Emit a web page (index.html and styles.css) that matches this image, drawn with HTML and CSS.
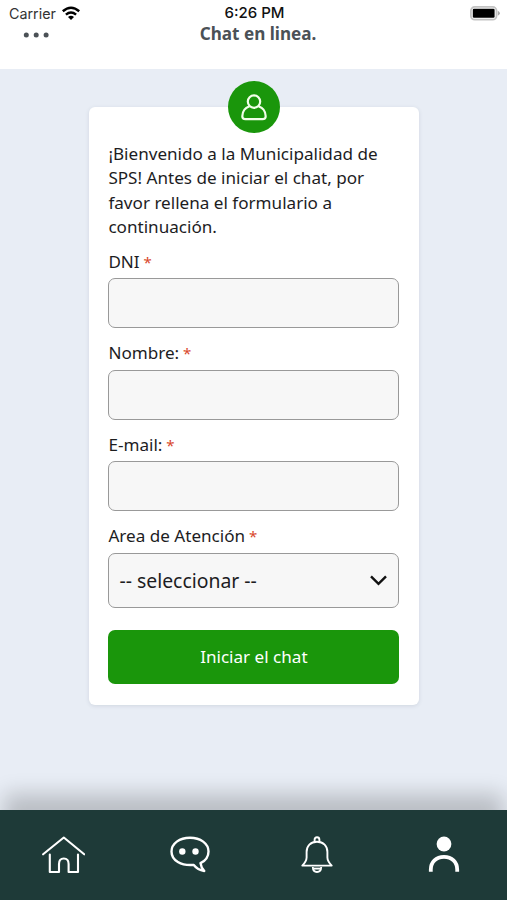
FILE: index.html
```html
<!DOCTYPE html>
<html lang="es">
<head>
<meta charset="utf-8">
<title>Chat en linea.</title>
<link rel="stylesheet" href="styles.css">
</head>
<body>
<div class="screen">
  <header class="header">
    <div class="status">
      <div class="carrier">
        <span>Carrier</span>
        <svg width="20" height="15" viewBox="0 0 20 15"><g fill="none" stroke="#000" stroke-width="2.5"><path d="M1.8 5.2Q10-1.7 18.2 5.2"/><path d="M4.9 8.6Q10 4.3 15.1 8.6"/></g><path d="M7 11Q10 8.7 13 11L10 14Z"/></svg>
      </div>
      <div class="time">6:26 PM</div>
      <svg class="battery" width="31" height="15" viewBox="0 0 31 15"><rect x="1.9" y=".9" width="25.6" height="12.8" rx="3.8" fill="#fff" stroke="#c3c3c3" stroke-width="1.8"/><rect x="3.8" y="2.8" width="21.8" height="9" rx="1.2"/><path d="M28.8 4.8Q33 7.3 28.8 9.8Z" fill="#aaa"/></svg>
    </div>
    <div class="titlebar">
      <svg class="dots" width="26" height="6" viewBox="0 0 26 6"><g fill="#4b5156"><circle cx="3.3" cy="3" r="2.5"/><circle cx="13.2" cy="3" r="2.5"/><circle cx="23.1" cy="3" r="2.5"/></g></svg>
      <h1 class="title">Chat en linea.</h1>
    </div>
  </header>
  <main class="main">
    <form class="card">
      <div class="avatar">
        <svg width="26" height="27" viewBox="0 0 26 27" fill="none" stroke="#f2ffe9" stroke-width="2.2"><circle cx="13" cy="7.6" r="6.2"/><path d="M8.4 12.2C3.6 13.9 1.4 18 1.3 22.2Q1.3 25.2 4.5 25.2H21.5Q24.7 25.2 24.7 22.2C24.6 18 22.4 13.9 17.6 12.2"/></svg>
      </div>
      <p class="intro">¡Bienvenido a la Municipalidad de SPS! Antes de iniciar el chat, por favor rellena el formulario a continuación.</p>
      <div class="field"><label class="label" for="dni">DNI <span class="req">*</span></label><input class="control" id="dni"></div>
      <div class="field"><label class="label" for="nombre">Nombre: <span class="req">*</span></label><input class="control" id="nombre"></div>
      <div class="field"><label class="label" for="email">E-mail: <span class="req">*</span></label><input class="control" id="email"></div>
      <div class="field"><span class="label">Area de Atención <span class="req">*</span></span>
        <div class="control select"><span>-- seleccionar --</span><svg width="17" height="11" viewBox="0 0 17 11" fill="none" stroke="#111" stroke-width="2.4"><path d="M1 1.3L8.5 8.8L16 1.3"/></svg></div>
      </div>
      <button class="submit" type="button">Iniciar el chat</button>
    </form>
  </main>
  <nav class="nav">
    <a class="tab"><svg width="44" height="38" viewBox="-.8 0 44 38" fill="none" stroke="#fff" stroke-width="2.1" stroke-linecap="round" stroke-linejoin="round"><path d="M1.3 18.3L22 1.5L42.4 18.3"/><path d="M8 18.5V36H17.2V28Q17.2 22.5 22 22.5T26.8 28V36H36.2V18.5"/></svg></a>
    <a class="tab"><svg width="44" height="38" viewBox="0 0 44 38" fill="none" stroke="#fff" stroke-width="2.4" stroke-linejoin="round"><path d="M22 1.7C32.5 1.7 40.5 7.5 40.5 15.5C40.5 21 37 25 32.5 27.2Q33 31.5 36.3 35Q29.5 33.7 25.8 28.9C13 30 3.5 24.5 3.5 15.5C3.5 7.5 11.5 1.7 22 1.7Z"/><circle cx="14.3" cy="15.5" r="3.2" fill="#fff" stroke="none"/><circle cx="27.5" cy="15.5" r="3.2" fill="#fff" stroke="none"/></svg></a>
    <a class="tab"><svg width="44" height="38" viewBox="0 0 44 38" fill="none" stroke="#fff" stroke-width="1.9" stroke-linejoin="round"><path d="M19.6 6V3.7Q19.6 1.2 22 1.2T24.4 3.7V6"/><path d="M22 5.8C15.5 5.8 11.6 10 11.6 16V21.5C11.6 25 9.5 27.3 7.3 29.6H36.7C34.5 27.3 32.4 25 32.4 21.5V16C32.4 10 28.5 5.8 22 5.8Z"/><path d="M17.8 31Q18 36 22 36T26.2 31"/><path d="M19 32.6H25"/></svg></a>
    <a class="tab"><svg width="44" height="38" viewBox="0 0 44 38"><circle cx="22" cy="8" r="7.4" fill="#fff"/><path d="M8.8 35.7V33.5C8.8 26 14.2 20.8 22 20.8S35.2 26 35.2 33.5V35.7" fill="none" stroke="#fff" stroke-width="3.8"/></svg></a>
  </nav>
</div>
</body>
</html>
```
FILE: styles.css
```css
* { box-sizing: border-box; }
body { margin: 0; font-family: "Noto Sans", sans-serif; color: #1d1d1f; }
svg { display: block; flex: none; }
.screen { width: 507px; height: 900px; display: flex; flex-direction: column; overflow: hidden; background: #e8edf5; }
.header { height: 69px; flex: none; background: #fff; }
.status { height: 26px; padding: 0 7px 0 9px; display: grid; grid-template-columns: 1fr auto 1fr; align-items: center; font-family: Inter, sans-serif; }
.carrier { display: flex; align-items: center; gap: 5px; font-size: 14.3px; color: #333; }
.time { font-size: 15px; line-height: 18px; font-weight: 500; color: #111; }
.battery { justify-self: end; }
.titlebar { height: 18px; padding-left: 23px; display: grid; grid-template-columns: 26px 1fr 40px; align-items: center; }
.title { margin: -2px 0 0; text-align: center; font-size: 17.1px; line-height: 18px; font-weight: 700; color: #4b5156; }
.main { flex: 1; padding-top: 38px; }
.card { position: relative; width: 330px; height: 598px; margin: 0 auto 0 89px; padding: 34.6px 19.5px 0 19.4px; border-radius: 6px; background: #fff; box-shadow: 0 1px 4px rgba(40, 60, 80, .12); }
.avatar { position: absolute; top: -26px; left: 139px; width: 52px; height: 52px; border-radius: 50%; background: #1a960b; display: grid; place-items: center; }
.intro { margin: 0 0 9px; font-size: 17.1px; line-height: 24.5px; }
.field { height: 91.6px; }
.label { display: block; height: 29.6px; font-size: 17.1px; line-height: 25px; }
.req { margin-left: -.6px; font-size: 15px; color: #d9472b; }
.control { display: block; width: 291px; height: 50px; margin: 0; padding: 0 11px 0 10px; border: 1.5px solid #999; border-radius: 7px; background: #f7f7f7; }
.select { height: 55px; display: flex; align-items: center; justify-content: space-between; font-size: 19.4px; }
.submit { display: block; width: 291px; height: 54px; margin: 14.6px 0 0; padding: 0; border: 0; border-radius: 7px; background: #1a960b; color: #fff; font: 17.1px "Noto Sans", sans-serif; }
.nav { height: 90px; flex: none; display: grid; grid-template-columns: repeat(4, 1fr); place-items: center; background: #1e3a38; box-shadow: 0 -20px 20px -4px rgba(0, 0, 0, .2); }
```
